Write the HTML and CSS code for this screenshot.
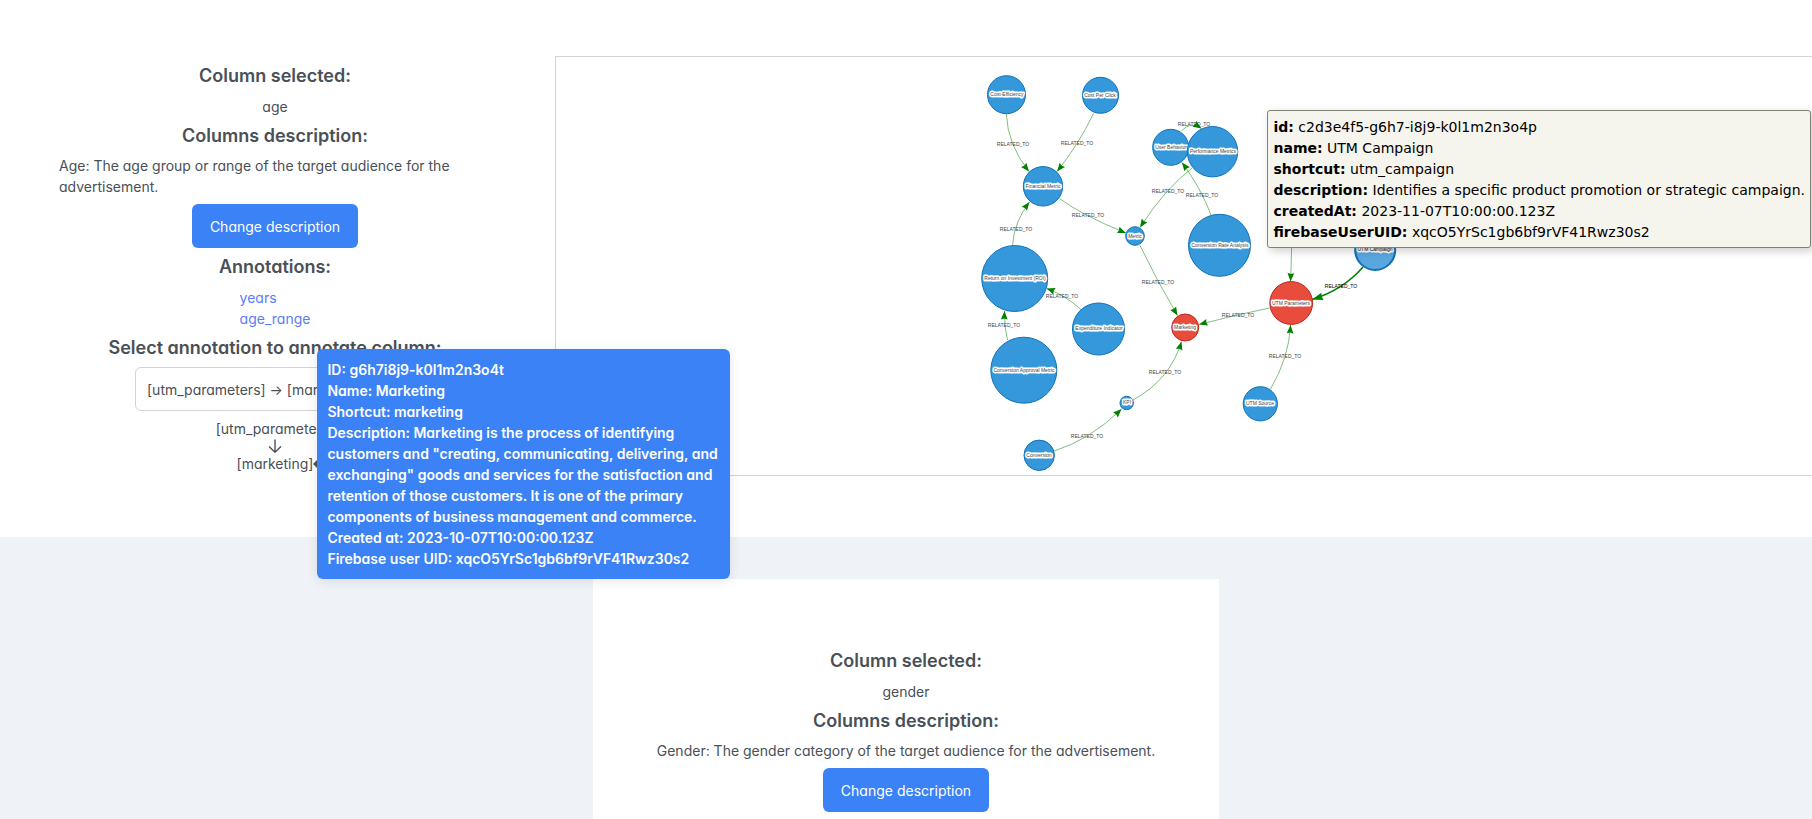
FILE: index.html
```html
<!DOCTYPE html>
<html lang="en">
<head>
<meta charset="utf-8">
<title>Column annotations</title>
<link rel="stylesheet" href="styles.css">
</head>
<body>
<section class="panel">
  <div class="details">
    <h2>Column selected:</h2>
    <p>age</p>
    <h2>Columns description:</h2>
    <p class="description">Age: The age group or range of the target audience for the advertisement.</p>
    <button type="button" class="button">Change description</button>
    <h2 class="after-button">Annotations:</h2>
    <div class="links">
      <a href="#years">years</a>
      <a href="#age_range">age_range</a>
    </div>
    <h2 class="select-title"><label for="annotation">Select annotation to annotate column:</label></h2>
    <select id="annotation" class="select"><option>[utm_parameters] → [marketing]</option></select>
    <div class="path">
      <span>[utm_parameters]</span>
      <svg class="arrow-down" viewBox="0 0 14 14" aria-hidden="true"><path d="M7 0.500v12.500M1 7.500L7 13.200l6-5.700"/></svg>
      <span class="path-end">[marketing]
        <span class="tip" role="tooltip">
          <span>ID: g6h7i8j9-k0l1m2n3o4t</span>
          <span>Name: Marketing</span>
          <span>Shortcut: marketing</span>
          <span>Description: Marketing is the process of identifying customers and "creating, communicating, delivering, and exchanging" goods and services for the satisfaction and retention of those customers. It is one of the primary components of business management and commerce.</span>
          <span>Created at: 2023-10-07T10:00:00.123Z</span>
          <span>Firebase user UID: xqcO5YrSc1gb6bf9rVF41Rwz30s2</span>
        </span>
      </span>
    </div>
  </div>
  <div class="graph">
    <svg class="network" viewBox="556 57 1256 418" role="img" aria-label="Annotation graph">
      <defs>
        <marker id="head" viewBox="-9 -4 10 8" refX="0" refY="0" markerWidth="10" markerHeight="8" markerUnits="userSpaceOnUse" orient="auto"><path d="M0 0L-8.500 3.400L-7.500 0L-8.500-3.400Z" fill="#008000"/></marker>
        <marker id="head-active" viewBox="-12 -5 13 10" refX="0" refY="0" markerWidth="13" markerHeight="10" markerUnits="userSpaceOnUse" orient="auto"><path d="M0 0L-11 3.800L-10 0L-11-3.800Z" fill="#008000"/></marker>
      </defs>
      <g class="edges">
        <path d="M1006.300 114Q1007.700 145 1029 171.500"/>
        <path d="M1093.500 113.500Q1078.700 144.500 1057 171.500"/>
        <path d="M1059.500 198.500Q1082.700 215.700 1126 233"/>
        <path d="M1012.500 245.500Q1014 222 1029.500 202"/>
        <path d="M1181.500 131Q1190 121 1201.500 128.500"/>
        <path d="M1192 168Q1164 190 1140 227.500"/>
        <path d="M1211 215Q1201 188 1182 162.500"/>
        <path d="M1140 245.500Q1157 281 1177.500 315.500"/>
        <path d="M1007.500 340Q1004 326 1004.500 311"/>
        <path d="M1081 309.500Q1065 295 1046.500 288.500"/>
        <path d="M1269.500 308Q1235 315 1199 324.500"/>
        <path d="M1133 400Q1170 380 1181.500 341.500"/>
        <path d="M1054 451Q1090 440 1121.500 409"/>
        <path d="M1270.500 389Q1289 358 1290.500 325"/>
        <path d="M1292 200Q1292 250 1290.500 281.500"/>
        <path class="active" d="M1363 267Q1343 290 1312 299.500"/>
      </g>
      <g class="nodes">
        <circle cx="1006.500" cy="94.700" r="19"/>
        <circle cx="1100.500" cy="95.300" r="18"/>
        <circle cx="1170.700" cy="147.300" r="18"/>
        <circle cx="1043" cy="186.300" r="19.700"/>
        <circle cx="1135" cy="236" r="9.300"/>
        <circle cx="1219.500" cy="245.300" r="31"/>
        <circle cx="1014.700" cy="278.500" r="33"/>
        <circle cx="1023.800" cy="370.200" r="33"/>
        <circle cx="1098.500" cy="329" r="26"/>
        <circle class="marked" cx="1185.200" cy="327.500" r="13.500"/>
        <circle cx="1126.700" cy="403" r="6.700"/>
        <circle cx="1039.200" cy="455.300" r="15.200"/>
        <circle class="marked" cx="1291.200" cy="303" r="21.400"/>
        <circle cx="1260.300" cy="403.800" r="17.100"/>
        <circle class="hovered" cx="1375.200" cy="250" r="20"/>
      </g>
      <g class="node-labels">
        <text x="1007" y="96">Cost-Efficiency</text>
        <text x="1100" y="97">Cost Per Click</text>
        <text x="1171" y="149">User Behavior</text>
        <text x="1043" y="188">Financial Metric</text>
        <text x="1135" y="238">Metric</text>
        <text x="1220" y="247">Conversion Rate Analysis</text>
        <text x="1015" y="280">Return on Investment (ROI)</text>
        <text x="1024" y="372">Conversion Approval Metric</text>
        <text x="1099" y="330">Expenditure Indicator</text>
        <text x="1185" y="329">Marketing</text>
        <text x="1127" y="404">KPI</text>
        <text x="1039" y="457">Conversion</text>
        <text x="1291" y="305">UTM Parameters</text>
        <text x="1260" y="405">UTM Source</text>
        <text class="strong" x="1375" y="251">UTM Campaign</text>
      </g>
      <g class="nodes"><circle cx="1212.500" cy="151.700" r="25.200"/></g>
      <g class="node-labels"><text x="1213" y="153">Performance Metrics</text></g>
      <g class="edge-labels">
        <text x="1013" y="146">RELATED_TO</text>
        <text x="1077" y="145">RELATED_TO</text>
        <text x="1088" y="217">RELATED_TO</text>
        <text x="1016" y="231">RELATED_TO</text>
        <text x="1194" y="126">RELATED_TO</text>
        <text x="1168" y="193">RELATED_TO</text>
        <text x="1202" y="197">RELATED_TO</text>
        <text x="1158" y="284">RELATED_TO</text>
        <text x="1004" y="327">RELATED_TO</text>
        <text x="1062" y="298">RELATED_TO</text>
        <text x="1238" y="317">RELATED_TO</text>
        <text x="1165" y="374">RELATED_TO</text>
        <text x="1087" y="438">RELATED_TO</text>
        <text x="1285" y="358">RELATED_TO</text>
        <text x="1292" y="247">RELATED_TO</text>
        <text class="strong" x="1341" y="288">RELATED_TO</text>
      </g>
    </svg>
    <div class="node-tip" role="tooltip">
      <div><b>id:</b> c2d3e4f5-g6h7-i8j9-k0l1m2n3o4p</div>
      <div><b>name:</b> UTM Campaign</div>
      <div><b>shortcut:</b> utm_campaign</div>
      <div><b>description:</b> Identifies a specific product promotion or strategic campaign.</div>
      <div><b>createdAt:</b> 2023-11-07T10:00:00.123Z</div>
      <div><b>firebaseUserUID:</b> xqcO5YrSc1gb6bf9rVF41Rwz30s2</div>
    </div>
  </div>
</section>
<section class="card">
  <h2>Column selected:</h2>
  <p>gender</p>
  <h2>Columns description:</h2>
  <p class="description">Gender: The gender category of the target audience for the advertisement.</p>
  <button type="button" class="button">Change description</button>
</section>
</body>
</html>
```
FILE: styles.css
```css
* { box-sizing: border-box; }
html { height: 100%; overflow: hidden; }
body {
  margin: 0;
  background: #eff3f8;
  color: #495057;
  font: 14px/21px Inter, "Liberation Sans", sans-serif;
  font-feature-settings: "cv11";
}
h2, p { margin: 0; }
h2 { font-size: 18px; line-height: 21px; font-weight: 600; }
h2 + p { margin-top: 10px; }
p + h2 { margin-top: 8px; }
h2 + .description { margin-top: 9px; }
a { color: #5b7cf7; text-decoration: none; }

.panel {
  display: flex;
  align-items: flex-start;
  min-height: 537px;
  padding-top: 56px;
  background: #fff;
}
.details {
  flex: 0 0 555px;
  display: flex;
  flex-direction: column;
  align-items: center;
  padding: 9px 64px 0 59px;
}
.button {
  height: 44px;
  margin-top: 7px;
  padding: 0 18px;
  border: 0;
  border-radius: 6px;
  background: #3b82f6;
  color: #fff;
  font: inherit;
  font-feature-settings: inherit;
}
.after-button { margin-top: 8px; }
.links { display: flex; flex-direction: column; margin-top: 10px; }
.select-title { margin-top: 8px; }
.select {
  appearance: none;
  width: 280px;
  height: 44px;
  margin-top: 9px;
  padding: 0 11px;
  border: 1px solid #ced4da;
  border-radius: 6px;
  background: #fff;
  color: #495057;
  font: inherit;
  font-feature-settings: inherit;
}
.path {
  display: flex;
  flex-direction: column;
  align-items: center;
  margin-top: 7px;
}
.arrow-down {
  width: 14px;
  height: 14px;
  fill: none;
  stroke: #495057;
  stroke-width: 1.4;
}
.path-end { position: relative; }
.tip {
  position: absolute;
  left: calc(100% + 4px);
  top: 50%;
  z-index: 2;
  display: flex;
  flex-direction: column;
  width: 413px;
  padding: 10px;
  border-radius: 6px;
  background: #3b82f6;
  color: #fff;
  font-weight: 600;
  box-shadow: 0 2px 12px rgba(0, 0, 0, .1);
  transform: translateY(-50%);
}
.tip::before {
  content: "";
  position: absolute;
  right: 100%;
  top: 50%;
  margin-top: -4px;
  border: solid transparent;
  border-width: 4px 4px 4px 0;
  border-right-color: #495057;
}

.graph {
  position: relative;
  flex: 1;
  border: 1px solid #d3d3d3;
  border-right: 0;
}
.network { display: block; width: 100%; height: 418px; }
.edges path {
  fill: none;
  stroke: rgba(0, 128, 0, .5);
  stroke-width: 1;
  marker-end: url(#head);
}
.edges .active { stroke: #008000; stroke-width: 1.5; marker-end: url(#head-active); }
.nodes circle { fill: #3498db; stroke: #1171b8; stroke-width: 1; }
.nodes .marked { fill: #e74c3c; stroke: #c0281c; }
.nodes .hovered { fill: #5aa7e0; stroke-width: 2; }
.network text { font: 5px "Liberation Sans", Arial, sans-serif; text-anchor: middle; fill: #444; }
.node-labels text {
  stroke: #fff;
  stroke-width: 3;
  stroke-linejoin: round;
  paint-order: stroke;
}
.network .strong { fill: #000; }
.node-tip {
  position: absolute;
  top: 53px;
  right: 1px;
  padding: 6px 5px 4px;
  border: 1px solid #808074;
  border-radius: 3px;
  background: #f5f4ed;
  color: #000;
  font: 14px/21px Verdana, "DejaVu Sans", sans-serif;
  white-space: nowrap;
  box-shadow: 3px 3px 10px rgba(0, 0, 0, .2);
}

.card {
  display: flex;
  flex-direction: column;
  align-items: center;
  width: fit-content;
  min-height: 280px;
  margin: 42px auto 0;
  padding: 71px 64px 0;
  background: #fff;
}
```
